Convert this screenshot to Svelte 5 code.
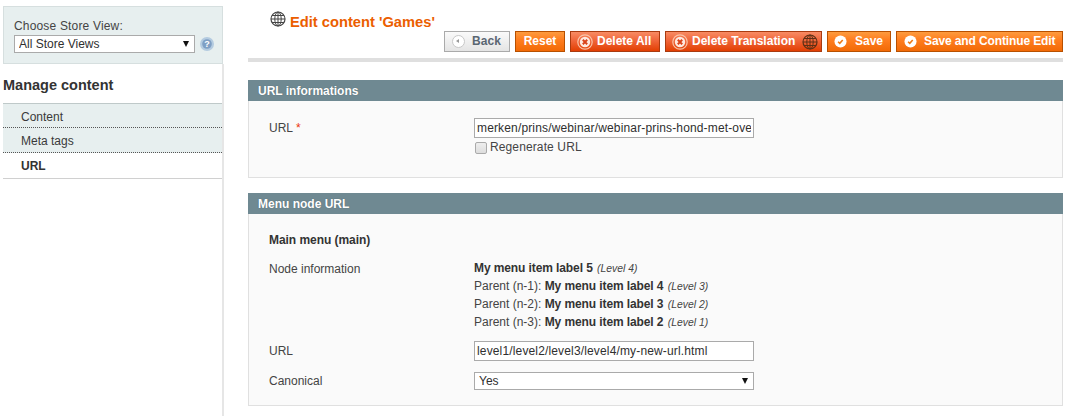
<script>
  const parents = [
    { n: 1, label: 4, level: 3 },
    { n: 2, label: 3, level: 2 },
    { n: 3, label: 2, level: 1 }
  ];
</script>

{#snippet globe(cls)}
  <svg class={cls} viewBox="0 0 16 16" aria-hidden="true">
    <circle cx="8" cy="8" r="7" fill="none" stroke="currentColor" stroke-width="1.2"/>
    <ellipse cx="8" cy="8" rx="3.2" ry="7" fill="none" stroke="currentColor" stroke-width="1"/>
    <path d="M8 1v14M1 8h14M2 4.5h12M2 11.5h12" fill="none" stroke="currentColor" stroke-width="1"/>
  </svg>
{/snippet}

{#snippet cross()}
  <svg class="btn-icon" viewBox="0 0 16 16" aria-hidden="true">
    <circle cx="8" cy="8" r="7.2" fill="none" stroke="#f9c3a8" stroke-width="1.2"/>
    <circle cx="8" cy="8" r="5.2" fill="#fde9e0"/>
    <path d="M5.8 5.8l4.4 4.4M10.2 5.8l-4.4 4.4" stroke="#d9431a" stroke-width="2"/>
  </svg>
{/snippet}

{#snippet check()}
  <svg class="btn-icon check-icon" viewBox="0 0 14 14" aria-hidden="true">
    <circle cx="7" cy="7" r="6.5" fill="#fff"/>
    <path d="M4.4 7.2l1.8 1.8 3.2-3.6" fill="none" stroke="#ef7a14" stroke-width="1.7"/>
  </svg>
{/snippet}

<div class="page">
  <aside class="side">
    <div class="store">
      <label class="store-label" for="store">Choose Store View:</label>
      <div class="store-row">
        <div class="select store-select">
          <select id="store"><option>All Store Views</option></select>
        </div>
        <svg class="help" viewBox="0 0 14 14" aria-hidden="true">
          <circle cx="7" cy="7" r="7" fill="#b4cbe0"/>
          <circle cx="7" cy="7" r="4.8" fill="#7f9fc4"/>
          <text x="7" y="10.2" text-anchor="middle" class="help-q">?</text>
        </svg>
      </div>
    </div>
    <div class="side-nav">
      <h3 class="side-title">Manage content</h3>
      <ul class="tabs">
        <li class="tab">Content</li>
        <li class="tab">Meta tags</li>
        <li class="tab active">URL</li>
      </ul>
    </div>
  </aside>

  <main class="main">
    <div class="head">
      <h3 class="title">
        {@render globe("title-globe")}
        <span>Edit content 'Games'</span>
      </h3>
      <div class="actions">
        <button class="btn back">
          <span class="back-icon"></span>Back
        </button>
        <button class="btn orange reset">Reset</button>
        <button class="btn red del-all">{@render cross()}Delete All</button>
        <button class="btn red del-tr">{@render cross()}Delete Translation{@render globe("btn-globe")}</button>
        <button class="btn orange save">{@render check()}Save</button>
        <button class="btn orange save-c">{@render check()}Save and Continue Edit</button>
      </div>
    </div>

    <section class="panel first">
      <h4 class="panel-head">URL informations</h4>
      <div class="panel-body url-body">
        <div class="row">
          <span class="label">URL <em class="req">*</em></span>
          <div class="value">
            <input class="text" value="merken/prins/webinar/webinar-prins-hond-met-overgewicht" />
            <label class="regen"><input type="checkbox" class="check" /> Regenerate URL</label>
          </div>
        </div>
      </div>
    </section>

    <section class="panel">
      <h4 class="panel-head">Menu node URL</h4>
      <div class="panel-body menu-body">
        <p class="menu-name">Main menu (main)</p>
        <div class="row node-row">
          <span class="label">Node information</span>
          <div class="value nodes">
            <div><b>My menu item label 5</b> <i>(Level 4)</i></div>
            {#each parents as p}
              <div>Parent (n-{p.n}): <b>My menu item label {p.label}</b> <i>(Level {p.level})</i></div>
            {/each}
          </div>
        </div>
        <div class="row url-row">
          <span class="label">URL</span>
          <div class="value"><input class="text" value="level1/level2/level3/level4/my-new-url.html" /></div>
        </div>
        <div class="row canon-row">
          <span class="label">Canonical</span>
          <div class="value">
            <div class="select"><select><option>Yes</option></select></div>
          </div>
        </div>
      </div>
    </section>
  </main>
</div>

<style>
  :global(body) {
    margin: 0;
    background: #fff;
    font: 12px/15px "Liberation Sans", Arial, sans-serif;
    color: #444;
  }
  .page {
    display: flex;
    height: 416px;
    overflow: hidden;
  }
  .side {
    width: 220px;
    margin-left: 3px;
    flex: none;
    padding-top: 6px;
    display: flex;
    flex-direction: column;
  }
  .store {
    height: 58px;
    flex: none;
    box-sizing: border-box;
    background: #e7efef;
    border: 1px solid #d6dfdf;
    padding: 12px 0 0 10px;
  }
  .store-label {
    display: block;
    height: 16px;
    font-size: 12px;
    line-height: 15px;
    letter-spacing: 0.17px;
  }
  .store-row {
    display: flex;
    align-items: center;
    gap: 5px;
  }
  .select {
    position: relative;
    width: 280px;
  }
  .select.store-select {
    width: 181px;
    flex: none;
  }
  .help {
    width: 14px;
    height: 14px;
    flex: none;
  }
  .help-q {
    font: bold 9px "Liberation Sans", sans-serif;
    fill: #fff;
  }
  .select::after {
    content: "";
    position: absolute;
    right: 6px;
    top: 6px;
    border: 3px solid transparent;
    border-top: 6px solid #111;
    border-bottom: 0;
    pointer-events: none;
  }
  select {
    display: block;
    width: 100%;
    height: 18px;
    box-sizing: border-box;
    appearance: none;
    background: #fff;
    border: 1px solid #aaa;
    border-radius: 0;
    padding: 0 4px;
    font: 12px/15px "Liberation Sans", Arial, sans-serif;
    color: #2f2f2f;
  }
  .side-nav {
    flex: 1;
    border-right: 2px solid #e6e6e6;
    margin-right: -1px;
  }
  .side-title {
    margin: 13px 0 9px;
    font-size: 14.5px;
    line-height: 17px;
    font-weight: bold;
    color: #333;
  }
  .tabs {
    list-style: none;
    margin: 0;
    padding: 0;
    border-top: 1px solid #bfc9c9;
    border-bottom: 1px solid #d0d0d0;
  }
  .tab {
    height: 24px;
    box-sizing: border-box;
    padding: 6px 0 0 18px;
    background: #e7efef;
    border-bottom: 1px dotted #555;
    color: #3a3a3a;
  }
  .tab:nth-child(2) {
    height: 25px;
  }
  .tab.active {
    height: 25px;
    background: #fff;
    border-bottom: 0;
    font-weight: bold;
    color: #333;
  }
  .main {
    width: 815px;
    margin-left: 25px;
    flex: none;
  }
  .head {
    height: 58px;
    border-bottom: 4px solid #dfdfdf;
    margin-bottom: 18px;
    display: flex;
    flex-direction: column;
  }
  .title {
    margin: 11px 0 0 22px;
    height: 20px;
    display: flex;
    align-items: flex-start;
    gap: 4px;
    font-size: 14.7px;
    line-height: 22px;
    font-weight: bold;
    color: #eb5e00;
  }
  .title :global(.title-globe) {
    width: 16px;
    height: 16px;
    color: #444;
    flex: none;
  }
  .actions {
    display: flex;
    justify-content: flex-end;
    gap: 5px;
  }
  .btn {
    height: 21px;
    box-sizing: border-box;
    border: 1px solid #b85000;
    background: linear-gradient(#fd9b3e, #ff7e20 40%, #f26a06);
    color: #fff;
    font: bold 12px/17px "Liberation Sans", Arial, sans-serif;
    padding: 0;
    display: flex;
    align-items: center;
    justify-content: flex-start;
    white-space: nowrap;
  }
  .back {
    width: 66px;
    background: linear-gradient(#fafafa, #e4e4e4);
    border-color: #aaa;
    color: #5a6672;
    padding-left: 7px;
    letter-spacing: 0.1px;
  }
  .back-icon {
    width: 13px;
    height: 13px;
    box-sizing: border-box;
    border: 1px solid #c8c8c8;
    border-radius: 50%;
    background: #fff;
    margin-right: 7px;
    position: relative;
    flex: none;
  }
  .back-icon::after {
    content: "";
    position: absolute;
    left: 3px;
    top: 3px;
    border: 2.5px solid transparent;
    border-right: 3px solid #999;
    border-left: 0;
  }
  .reset {
    width: 50px;
    justify-content: center;
  }
  .red {
    background: linear-gradient(#f88b63, #f0663a 45%, #e23f02);
    border-color: #a93b10;
    padding-left: 6px;
  }
  .del-all { width: 90px; }
  .del-tr { width: 157px; }
  .save { width: 64px; padding-left: 6px; }
  .save-c { width: 167px; padding-left: 6px; letter-spacing: -0.12px; }
  .btn :global(.btn-icon) {
    width: 16px;
    height: 16px;
    margin-right: 4px;
    flex: none;
  }
  .btn :global(.check-icon) {
    width: 13px;
    height: 13px;
    margin-right: 8px;
  }
  .save-c :global(.check-icon) {
    margin-right: 7px;
    margin-left: 1px;
  }
  .btn :global(.btn-globe) {
    width: 16px;
    height: 16px;
    margin-left: 7px;
    color: #5d3016;
    flex: none;
  }
  .panel.first { margin-bottom: 15px; }
  .panel-head {
    margin: 0;
    height: 21px;
    box-sizing: border-box;
    background: #6f8992;
    color: #fff;
    font-size: 12px;
    line-height: 22px;
    font-weight: bold;
    padding-left: 10px;
    text-shadow: 0 0 1px #4a5f66;
  }
  .panel-body {
    background: #fafafa;
    border: 1px solid #e0e0e0;
    border-top: 0;
    box-sizing: border-box;
    padding-left: 20px;
  }
  .url-body { height: 77px; padding-top: 17px; }
  .menu-body { height: 192px; padding-top: 19px; }
  .row { display: flex; }
  .label {
    width: 205px;
    flex: none;
    padding-top: 3px;
    color: #444;
  }
  .req { color: #eb340a; font-style: normal; }
  .value { width: 280px; }
  .text {
    display: block;
    width: 280px;
    height: 20px;
    box-sizing: border-box;
    border: 1px solid #aaa;
    padding: 0 2px;
    font: 12px/15px "Liberation Sans", Arial, sans-serif;
    letter-spacing: 0.15px;
    color: #2f2f2f;
    background: #fff;
    outline: none;
  }
  .regen {
    display: flex;
    align-items: center;
    gap: 3px;
    height: 15px;
    margin-top: 2px;
    letter-spacing: 0.12px;
  }
  .check {
    appearance: none;
    width: 12px;
    height: 12px;
    margin: 0 0 0 1px;
    border: 1px solid #aaa;
    border-radius: 2px;
    background: linear-gradient(#eee, #ddd);
  }
  .menu-name {
    margin: 0 0 13px;
    font-weight: bold;
    color: #333;
    line-height: 15px;
    letter-spacing: -0.05px;
  }
  .node-row .label { padding-top: 1px; }
  .nodes div {
    height: 18px;
    line-height: 15px;
  }
  .nodes b { color: #333; letter-spacing: -0.1px; }
  .nodes i { font-size: 10.4px; margin-left: 1px; }
  .url-row { margin-top: 8px; }
  .canon-row { margin-top: 11px; }
  .canon-row .label { padding-top: 2px; }
</style>
